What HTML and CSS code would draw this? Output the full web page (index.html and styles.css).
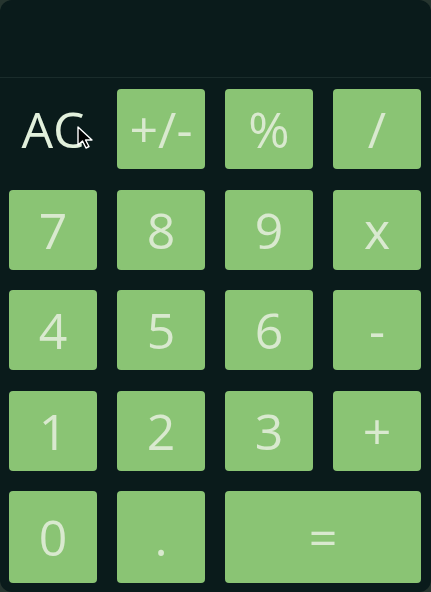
FILE: index.html
```html
<!DOCTYPE html>
<html>
<head>
<meta charset="utf-8">
<link rel="stylesheet" href="styles.css">
</head>
<body>
<div class="calc">
  <div class="display"></div>
  <div class="keys">
    <div class="key clear">AC
      <svg class="cursor" width="20" height="24" viewBox="0 0 20 24"><path d="M2 1 L2 19 L6.5 15 L10 22 L13 20.5 L9.5 14 L16 14 Z" fill="#000" stroke="#fff" stroke-width="1.4" stroke-linejoin="round"/></svg>
    </div>
    <div class="key">+/-</div>
    <div class="key">%</div>
    <div class="key">/</div>
    <div class="key">7</div>
    <div class="key">8</div>
    <div class="key">9</div>
    <div class="key">x</div>
    <div class="key">4</div>
    <div class="key">5</div>
    <div class="key">6</div>
    <div class="key">-</div>
    <div class="key">1</div>
    <div class="key">2</div>
    <div class="key">3</div>
    <div class="key">+</div>
    <div class="key">0</div>
    <div class="key">.</div>
    <div class="key wide">=</div>
  </div>
</div>
</body>
</html>
```
FILE: styles.css
```css
html, body {
  margin: 0;
  padding: 0;
  background: #26352f;
}
.calc {
  width: 431px;
  height: 592px;
  background: #0a1b1b;
  border-radius: 12px;
  overflow: hidden;
  font-family: "Open Sans", "Noto Sans", sans-serif;
  display: flex;
  flex-direction: column;
}
.display {
  height: 77px;
  border-bottom: 1px solid #1a2c2b;
  flex: none;
}
.keys {
  flex: 1;
  display: grid;
  grid-template-columns: repeat(4, 88px);
  grid-template-rows: repeat(4, 80px) 1fr;
  column-gap: 20px;
  row-gap: 20.5px;
  padding: 11px 10px 9px 9px;
}
.key {
  background: #8ac474;
  border-radius: 4px;
  color: #d9e9cf;
  font-size: 50px;
  line-height: 1;
  display: flex;
  align-items: center;
  justify-content: center;
  position: relative;
}
.clear {
  background: transparent;
  color: #e2f0dc;
}
.wide {
  grid-column: span 2;
}
.cursor {
  position: absolute;
  left: 67px;
  top: 37px;
}
```
